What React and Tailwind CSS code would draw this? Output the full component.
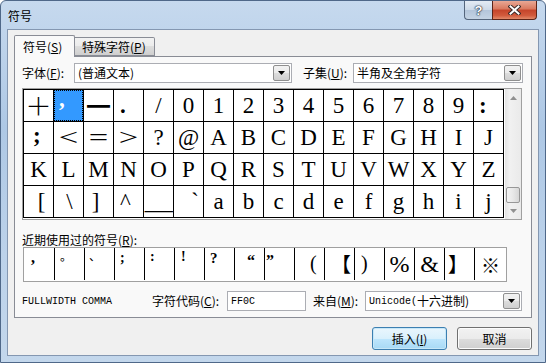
import React from 'react'

const ui = "font-['Noto_Sans_CJK_SC',sans-serif]"
const serif = "font-['Liberation_Serif','Noto_Sans_CJK_SC',serif]"
const cjk = "font-['Noto_Sans_CJK_SC',sans-serif]"
const mono = "font-['Liberation_Mono',monospace]"

const C = (c, cell = 'justify-center', span = '') => ({ c, cell, span })
const plain = s => s.split('').map(c => C(c))

const rows = [
  [
    C('＋', 'justify-center', `${cjk} text-[20px] font-light scale-x-[1.15] scale-y-[1.05]`),
    { c: ',', sel: true },
    C('━', 'justify-center', `${cjk} text-[17px]`),
    C('.', 'justify-start pl-[6px]', 'font-bold'),
    C('/'),
    ...plain('0123456789'),
    C(':', 'justify-start pl-[5px]', 'text-[20px] font-bold'),
  ],
  [
    C(';', 'justify-start pl-[9px]', 'text-[20px] font-bold -translate-y-[2px]'),
    C('<', 'justify-center', 'scale-x-[1.5]'),
    C('=', 'justify-center', 'scale-x-[1.5]'),
    C('>', 'justify-center', 'scale-x-[1.5]'),
    C('?'),
    C('@'),
    ...plain('ABCDEFGHIJ'),
  ],
  plain('KLMNOPQRSTUVWXYZ'),
  [
    C('[', 'justify-center', 'translate-x-[3px]'),
    C('\\', 'justify-center', 'translate-x-[1px]'),
    C(']', 'justify-center', '-translate-x-[3px]'),
    C('^', 'justify-center', '-translate-x-[3px]'),
    C('_', 'justify-center', 'scale-x-[2.4]'),
    C('`', 'justify-end pr-[4px]'),
    ...plain('abcdefghij'),
  ],
]

// small marks sit high in their cells, placed with a tight line box + top padding
const recent = [
  { c: ',', cell: 'w-[31px] items-start pt-[6px] pl-[7px]', span: `${serif} text-[16px] leading-[8px] font-bold` },
  { c: '。', cell: 'items-start pt-[4px] pl-[5px]', span: `${cjk} text-[12px] leading-[8px]` },
  { c: '、', cell: 'items-start pt-[4px] pl-[4px]', span: `${cjk} text-[12px] leading-[8px]` },
  { c: ';', cell: 'items-start pt-[6px] pl-[5px]', span: `${serif} text-[14px] leading-[8px] font-bold` },
  { c: ':', cell: 'items-start pt-[5px] pl-[5px]', span: `${serif} text-[14px] leading-[8px] font-bold` },
  { c: '!', cell: 'items-start pt-[5px] pl-[6px]', span: `${serif} text-[14px] leading-[8px] font-bold` },
  { c: '?', cell: 'items-start pt-[6px] pl-[5px]', span: `${serif} text-[15px] leading-[8px] font-bold` },
  { c: '\u201c', cell: 'items-start pt-[9px] pl-[12px]', span: `${serif} text-[16px] leading-[8px] font-bold` },
  { c: '\u201d', cell: 'items-start pt-[9px] pl-[1px]', span: `${serif} text-[16px] leading-[8px] font-bold` },
  { c: '(', cell: 'items-center pl-[15px]', span: `${serif} text-[20px] leading-none -translate-y-[1px]` },
  { c: '【', cell: 'items-center justify-end pr-[3px]', span: `${cjk} text-[20px] leading-none` },
  { c: ')', cell: 'items-center pl-[6px]', span: `${serif} text-[20px] leading-none -translate-y-[1px]` },
  { c: '%', cell: 'items-center justify-center', span: `${serif} text-[24px] leading-none` },
  { c: '&', cell: 'items-center justify-center', span: `${serif} text-[24px] leading-none` },
  { c: '】', cell: 'items-center pl-[3px]', span: `${cjk} text-[20px] leading-none` },
  { c: '※', cell: 'w-[31px] items-center justify-center border-r-0', span: `${cjk} text-[19px] leading-none` },
]

function Arrow() {
  return (
    <svg width="7" height="4" viewBox="0 0 7 4">
      <path d="M0 0h7L3.5 4z" fill="#000" />
    </svg>
  )
}

function Combo({ width, children }) {
  return (
    <div className={`${width} h-[20px] border border-[#abadb3] bg-white flex items-stretch`}>
      <div className="flex-1 flex items-center pl-[3px] text-[12px] text-black overflow-hidden whitespace-nowrap">{children}</div>
      <div className="w-[17px] m-px border border-[#8f8f8f] rounded-[2px] bg-[linear-gradient(#f2f2f2_0%,#ebebeb_50%,#dddddd_50%,#cfcfcf_100%)] flex items-center justify-center">
        <Arrow />
      </div>
    </div>
  )
}

function Key({ k }) {
  return <span className="underline">{k}</span>
}

export default function App() {
  return (
    <div className={`w-[546px] h-[363px] flex flex-col border border-[#4f6889] rounded-t-[6px] overflow-hidden bg-[linear-gradient(180deg,#c6d9ee_0%,#aec8e5_35%,#bcd2ea_70%,#c3d7ec_100%)] ${ui}`}>
      {/* title bar */}
      <div className="h-[28px] flex items-start">
        <div className="flex-1 pl-[7px] pt-[6px] text-[12px] text-black">符号</div>
        <div className="w-[28px] h-[19px] border border-[#54657c] border-t-0 border-r-0 rounded-bl-[4px] bg-[linear-gradient(#e4ebf4_0%,#ccd9e8_50%,#b3c5da_50%,#c4d3e4_100%)] flex items-center justify-center">
          <span className="text-white font-bold text-[13px] leading-none [text-shadow:0_0_1px_#1d2b3d,0_0_1px_#1d2b3d,0_0_2px_#1d2b3d] font-['Liberation_Sans',sans-serif]">?</span>
        </div>
        <div className="w-[45px] h-[19px] mr-[8px] border border-[#5c2418] border-t-0 rounded-br-[4px] bg-[linear-gradient(#e9a895_0%,#d9785e_45%,#c5442a_50%,#d15a3c_80%,#e28a6a_100%)] flex items-center justify-center">
          <svg width="13" height="10" viewBox="0 0 13 10">
            <path d="M2.5 1.5L10.5 8.5M10.5 1.5L2.5 8.5" stroke="#3a2a28" strokeWidth="4" strokeLinecap="square" />
            <path d="M2.5 1.5L10.5 8.5M10.5 1.5L2.5 8.5" stroke="#fff" strokeWidth="2" strokeLinecap="square" />
          </svg>
        </div>
      </div>

      {/* client area */}
      <div className="mx-[6px] h-[327px] border border-[#8497b1] bg-[#f0f0f0] flex flex-col">
        {/* tabs */}
        <div className="ml-[6px] mt-[5px] h-[22px] flex items-end relative z-10 -mb-px">
          <div className="w-[61px] h-[22px] border border-b-0 border-[#898c95] rounded-t-[2px] bg-[#f9f9f9] flex items-center pl-[8px] text-[12px] text-black">
            符号(<Key k="S" />)
          </div>
          <div className="w-[80px] h-[19px] mb-px border border-l-0 border-[#898c95] rounded-tr-[2px] bg-[linear-gradient(#f2f2f2_0%,#ebebeb_50%,#dddddd_50%,#cfcfcf_100%)] flex items-center pl-[7px] text-[12px] text-black">
            特殊字符(<Key k="P" />)
          </div>
        </div>

        {/* tab page */}
        <div className="ml-[6px] w-[518px] h-[262px] border border-[#898c95] bg-[#f9f9f9] flex flex-col text-[12px] text-black">
          <div className="mt-[6px] flex items-center">
            <div className="w-[59px] pl-[7px]">字体(<Key k="F" />):</div>
            <Combo width="w-[218px]">(普通文本)</Combo>
            <div className="w-[50px] ml-[11px]">子集(<Key k="U" />):</div>
            <Combo width="w-[170px]">半角及全角字符</Combo>
          </div>

          {/* symbol grid */}
          <div className="mt-[5px] ml-[7px] w-[500px] h-[132px] border border-[#a0a0a0] bg-white flex">
            <div className={`grid grid-cols-[repeat(16,30px)] border-l border-t border-black self-start ${serif}`}>
              {rows.flat().map((it, i) =>
                it.sel ? (
                  <div key={i} className="w-[30px] h-[32px] border-r border-b border-black">
                    <div className="w-full h-full border border-dotted border-black bg-[#3399ff] flex items-center justify-start pl-[4px]">
                      <span className="text-[23px] leading-none text-white font-bold -translate-y-[7px]">{it.c}</span>
                    </div>
                  </div>
                ) : (
                  <div key={i} className={`w-[30px] h-[32px] border-r border-b border-black flex items-center ${it.cell}`}>
                    <span className={`text-[23px] leading-none text-black inline-block ${it.span}`}>{it.c}</span>
                  </div>
                )
              )}
            </div>
            <div className="w-[17px] ml-px bg-[linear-gradient(90deg,#e3e3e3,#f1f1f1_30%,#eaeaea)] flex flex-col">
              <div className="h-[17px] flex items-center justify-center">
                <svg width="7" height="4" viewBox="0 0 7 4"><path d="M3.5 0L7 4H0z" fill="#909090" /></svg>
              </div>
              <div className="flex-1" />
              <div className="h-[16px] mx-px border border-[#979797] rounded-[2px] bg-[linear-gradient(90deg,#f3f3f3,#e8e8e8_50%,#d6d6d6)]" />
              <div className="h-[16px] flex items-center justify-center">
                <svg width="7" height="4" viewBox="0 0 7 4"><path d="M0 0h7L3.5 4z" fill="#909090" /></svg>
              </div>
            </div>
          </div>

          <div className="mt-[12px] h-[15px] pl-[7px] leading-[15px]">近期使用过的符号(<Key k="R" />):</div>

          {/* recent symbols */}
          <div className="ml-[8px] w-[484px] h-[35px] border border-[#a0a0a0] bg-white flex">
            {recent.map((it, i) => (
              <div key={i} className={`h-[32px] flex border-r border-black ${it.cell.includes('w-[31px]') ? '' : 'w-[30px]'} ${it.cell}`}>
                <span className={`text-black inline-block ${it.span}`}>{it.c}</span>
              </div>
            ))}
          </div>

          {/* code row */}
          <div className="mt-[9px] h-[20px] flex items-center">
            <div className={`w-[137px] pl-[7px] text-[10px] ${mono}`}>FULLWIDTH COMMA</div>
            <div className="w-[75px]">字符代码(<Key k="C" />):</div>
            <div className={`w-[79px] h-[20px] border border-[#abadb3] bg-white flex items-center pl-[3px] text-[10px] ${mono}`}>FF0C</div>
            <div className="w-[52px] ml-[7px]">来自(<Key k="M" />):</div>
            <Combo width="w-[157px]">
              <span className={`${mono} text-[10px]`}>Unicode(</span>十六进制)
            </Combo>
          </div>
        </div>

        {/* buttons */}
        <div className="mt-[9px] flex justify-end gap-[10px] pr-[6px] text-[12px] text-black">
          <button className="w-[75px] h-[23px] border border-[#3c7fb1] rounded-[3px] bg-[linear-gradient(#eaf6fd_0%,#d9f0fc_50%,#bee6fd_50%,#a7d9f5_100%)] shadow-[inset_0_0_0_1px_#c6e7f8]">
            插入(<Key k="I" />)
          </button>
          <button className="w-[75px] h-[23px] border border-[#707070] rounded-[3px] bg-[linear-gradient(#f2f2f2_0%,#ebebeb_50%,#dddddd_50%,#cfcfcf_100%)] shadow-[inset_0_0_0_1px_#fcfcfc]">
            取消
          </button>
        </div>
      </div>
    </div>
  )
}
